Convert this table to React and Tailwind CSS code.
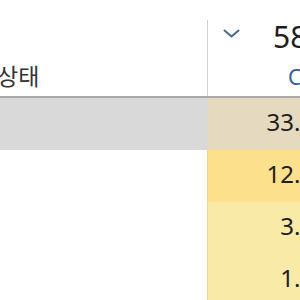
import React from 'react';

const rows = [
  { value: '33.5%', left: 'bg-[#d9d9d9]', cell: 'bg-[#e5d9bf] border-[#d9d9d9]' },
  { value: '12.4%', left: 'bg-white', cell: 'bg-[#fde08b] border-[#ead49a]' },
  { value: '3.1%', left: 'bg-white', cell: 'bg-[#f9eaa7] border-[#ead9a0]' },
  { value: '1.8%', left: 'bg-white', cell: 'bg-[#f9eaa7] border-[#ead9a0]' },
];

function Chevron() {
  return (
    <svg width="17" height="9" viewBox="0 0 17 9" fill="none">
      <path d="M1.5 1.5 L8.5 7.5 L15.5 1.5" stroke="#4a6890" strokeWidth="2" strokeLinecap="round" strokeLinejoin="round" />
    </svg>
  );
}

export default function App() {
  return (
    <div
      className="w-[300px] h-[300px] overflow-hidden bg-white"
      style={{ fontFamily: '"Noto Sans", "Noto Sans CJK KR", sans-serif' }}
    >
      <div className="w-[360px]">
        {/* header */}
        <div className="flex h-[98px] border-b-2 border-[#a9a9a9]">
          <div className="w-[207px] shrink-0 flex items-end pb-[8px]">
            <span className="text-[23px] leading-none text-[#333] -ml-[3px]">상태</span>
          </div>
          <div className="flex-1 mt-[20px] border-l border-[#d0d0d0] flex">
            <div className="pl-[15px] pt-[9px]">
              <Chevron />
            </div>
            <div className="flex flex-col pl-[33px]">
              <span className="text-[30px] leading-none text-[#1d1d1d] mt-[2px] whitespace-nowrap">5820</span>
              <span className="text-[21px] leading-none text-[#2f5f9e] mt-[15px] pl-[15px] whitespace-nowrap">Count</span>
            </div>
          </div>
        </div>

        {/* body */}
        {rows.map((r) => (
          <div key={r.value} className="flex h-[52px]">
            <div className={`w-[207px] shrink-0 ${r.left}`} />
            <div className={`w-[133px] shrink-0 border-l ${r.cell} flex items-center justify-end pr-[6px] pb-[4px]`}>
              <span className="text-[24px] leading-none text-[#1d1d1d] whitespace-nowrap">{r.value}</span>
            </div>
          </div>
        ))}
      </div>
    </div>
  );
}
